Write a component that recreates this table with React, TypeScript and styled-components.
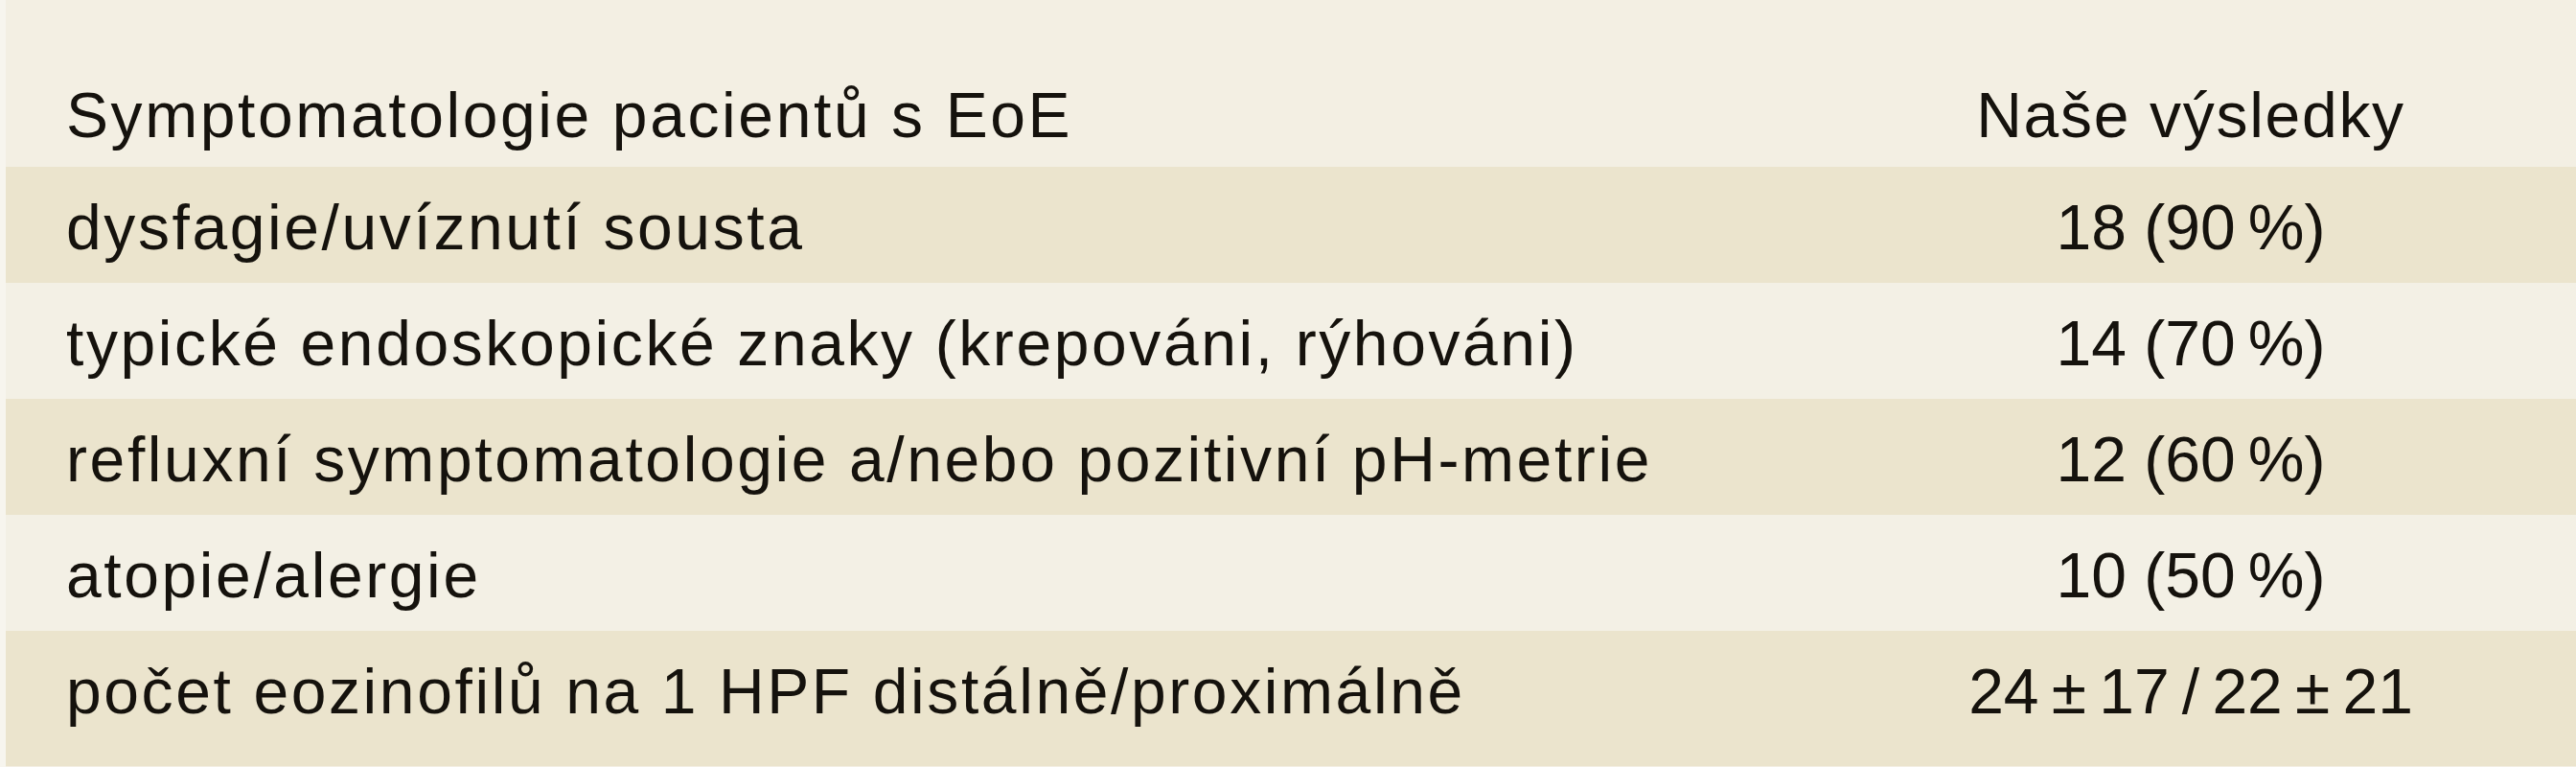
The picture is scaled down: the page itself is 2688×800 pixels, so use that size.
import React from 'react';
import styled, { createGlobalStyle } from 'styled-components';

interface IResultRow {
  label: string;
  value: string;
}

const rows: IResultRow[] = [
  { label: 'dysfagie/uvíznutí sousta', value: '18 (90\u2009%)' },
  { label: 'typické endoskopické znaky (krepováni, rýhováni)', value: '14 (70\u2009%)' },
  { label: 'refluxní symptomatologie a/nebo pozitivní pH-metrie', value: '12 (60\u2009%)' },
  { label: 'atopie/alergie', value: '10 (50\u2009%)' },
  {
    label: 'počet eozinofilů na 1 HPF distálně/proximálně',
    value: '24\u2009±\u200917\u2009/\u200922\u2009±\u200921',
  },
];

export default function App() {
  return (
    <>
      <GlobalStyle />
      <Page>
        <Table>
          <HeaderRow>
            <Label>Symptomatologie pacientů s EoE</Label>
            <HeaderValue>Naše výsledky</HeaderValue>
          </HeaderRow>
          {rows.map((row, index) => (
            <Row key={row.label} $shaded={index % 2 === 0} $last={index === rows.length - 1}>
              <Label>{row.label}</Label>
              <Value>{row.value}</Value>
            </Row>
          ))}
        </Table>
      </Page>
    </>
  );
}

const GlobalStyle = createGlobalStyle`
  html, body {
    margin: 0;
    padding: 0;
    background: #f3efe3;
  }
`;

const Page = styled.div`
  width: 2688px;
  height: 800px;
  box-sizing: border-box;
  padding-top: 57px;
  border-left: 6px solid #f7f5ee;
  background-color: #f3efe3;
  overflow: hidden;
  font-family: 'Liberation Sans', Arial, sans-serif;
  font-size: 66px;
  color: #15120d;
`;

const Table = styled.div`
  display: flex;
  flex-direction: column;
`;

const HeaderRow = styled.div`
  display: grid;
  grid-template-columns: 1878px 1fr;
  height: 117px;
  align-items: start;
`;

const Row = styled.div<{ $shaded: boolean; $last: boolean }>`
  display: grid;
  grid-template-columns: 1878px 1fr;
  align-items: start;
  height: ${(p) => (p.$last ? '141px' : '121px')};
  background-color: ${(p) => (p.$shaded ? '#ebe4cd' : '#f3f0e5')};
`;

const Label = styled.div`
  padding: 5px 0 0 63px;
  line-height: 116px;
  letter-spacing: 2.6px;
  white-space: nowrap;
`;

const HeaderValue = styled.div`
  padding-top: 5px;
  line-height: 116px;
  letter-spacing: 1.7px;
  text-align: center;
  white-space: nowrap;
`;

const Value = styled.div`
  padding-top: 5px;
  line-height: 116px;
  text-align: center;
  white-space: nowrap;
`;
